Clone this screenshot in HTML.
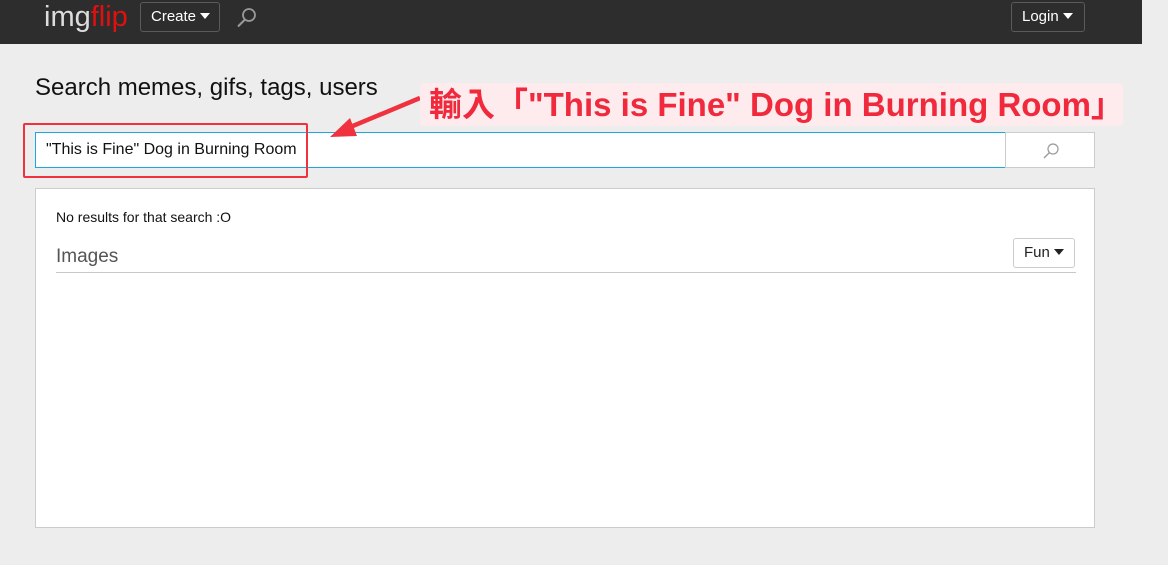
<!DOCTYPE html>
<html><head><meta charset="utf-8"><style>
*{box-sizing:border-box;margin:0;padding:0}
body{width:1168px;height:565px;background:#ededed;font-family:"Liberation Sans",Arial,sans-serif;position:relative;overflow:hidden}
.hdr{position:absolute;left:0;top:0;width:1142px;height:44px;background:#2d2d2d}
.logo{position:absolute;left:44px;top:1px;font-size:29px;color:#ddd;letter-spacing:0px}
.logo span{color:#e01010}
.btn{position:absolute;top:2px;height:30px;border:1px solid #5a5a5a;border-radius:3px;color:#fff;font-size:15px;line-height:28px;padding-left:10px}
.tri{display:inline-block;width:0;height:0;border-left:5px solid transparent;border-right:5px solid transparent;border-top:6px solid #fff;margin-left:4px;vertical-align:2px}
h1{position:absolute;left:35px;top:74px;font-size:24px;font-weight:normal;color:#111;letter-spacing:0}
.inp{position:absolute;left:35px;top:132px;width:971px;height:36px;background:#fff;border:1px solid #1aa8e0;font-size:16px;line-height:34px;padding-left:10px;color:#111}
.sb{position:absolute;left:1005px;top:132px;width:90px;height:36px;background:#fff;border:1px solid #ccc}
.panel{position:absolute;left:35px;top:188px;width:1060px;height:340px;background:#fff;border:1px solid #ccc}
.nr{position:absolute;left:20px;top:20px;font-size:14px;color:#111}
.img{position:absolute;left:20px;top:57px;font-size:19px;color:#555}
.line{position:absolute;left:20px;top:83px;width:1020px;height:1px;background:#c8c8c8}
.fun{position:absolute;left:977px;top:49px;width:62px;height:30px;border:1px solid #ccc;border-radius:3px;font-size:15px;line-height:28px;padding-left:10px;color:#222}
.fun .tri{border-top-color:#222}
.red{position:absolute;left:23px;top:123px;width:285px;height:55px;border:2.5px solid #f0323f;border-radius:2px}
.ann{position:absolute;left:420px;top:83px;width:703px;height:43px;background:#fdebed;border-radius:4px;color:#f02a3c;font-weight:bold;font-size:33px;line-height:43px;padding-left:9px;font-family:"Liberation Sans","Noto Sans CJK TC",sans-serif;letter-spacing:0;white-space:nowrap}
</style></head><body>
<div class="hdr">
<div class="logo">img<span>flip</span></div>
<div class="btn" style="left:140px;width:80px">Create<span class="tri"></span></div>
<svg style="position:absolute;left:235px;top:5px" width="24" height="24" viewBox="0 0 24 24"><circle cx="14" cy="10" r="6" fill="none" stroke="#999" stroke-width="1.8"/><line x1="10" y1="14.5" x2="3" y2="21.5" stroke="#999" stroke-width="2"/></svg>
<div class="btn" style="left:1011px;width:74px">Login<span class="tri"></span></div>
</div>
<h1>Search memes, gifs, tags, users</h1>
<div class="inp">"This is Fine" Dog in Burning Room</div>
<div class="sb"><svg style="position:absolute;left:35px;top:8px" width="20" height="20" viewBox="0 0 20 20"><circle cx="12" cy="8" r="5" fill="none" stroke="#999" stroke-width="1.2"/><line x1="8.5" y1="11.5" x2="3" y2="17" stroke="#999" stroke-width="1.3"/></svg></div>
<div class="panel">
<div class="nr">No results for that search :O</div>
<div class="img">Images</div>
<div class="fun">Fun<span class="tri"></span></div>
<div class="line"></div>
</div>
<div class="red"></div>
<svg style="position:absolute;left:0;top:0" width="1168" height="565"><line x1="420" y1="98" x2="348" y2="128" stroke="#f0323f" stroke-width="4.5"/><polygon points="330,137 350,118 357,136" fill="#f0323f"/></svg>
<div class="ann">輸入「"This is Fine" Dog in Burning Room」</div>
</body></html>
